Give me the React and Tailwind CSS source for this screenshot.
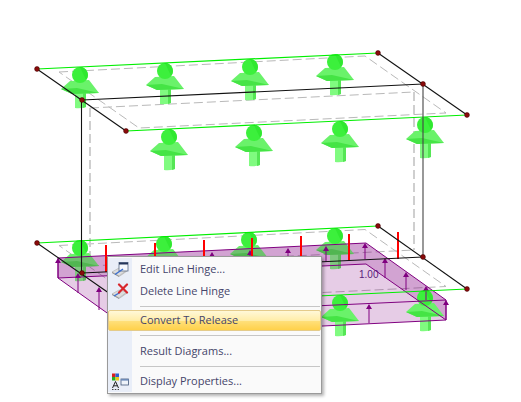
function Mushroom({ x, y }) {
  return (
    <g transform={`translate(${x} ${y})`}>
      <path d="M-5 17 L6 16 L6 32 Q0 34 -5 33 Z" fill="#80fb80" />
      <path d="M3 17 L6 16 L6 32 L3 33 Z" fill="#55e655" />
      <path d="M-19 14 L-10 6 L9 5 L19 18 L-8 19 Z" fill="#6af26a" />
      <path d="M-19 14 L-3 13 L19 18 L-8 19 Z" fill="#45e445" />
      <circle cx="0" cy="0" r="8" fill="#3cf03c" />
      <path d="M0 -8 A8 8 0 0 1 6 5 Z" fill="#30e830" />
    </g>
  )
}

function Arrow({ x, y, h }) {
  return (
    <g>
      <line x1={x} y1={y + 3} x2={x} y2={y + h} stroke="#800080" strokeWidth="1" />
      <path d={`M${x - 3} ${y + 5} L${x} ${y} L${x + 3} ${y + 5} Z`} fill="#800080" />
    </g>
  )
}

function Model() {
  const dash = { stroke: '#b9b9b9', strokeWidth: 1, strokeDasharray: '9 4', fill: 'none' }
  const nodes = [[37, 69], [378, 53], [467, 115], [126, 131], [82, 100], [423, 84], [37, 243], [378, 226], [467, 289], [82, 273], [423, 257]]
  const reds = [[106, 245], [155, 243], [204, 240], [252, 238], [301, 236], [349, 234], [398, 232]]
  const rearArrows = [[212, 252], [250, 250], [288, 248], [326, 246], [365, 243]]
  return (
    <svg width="521" height="402" viewBox="0 0 521 402" className="block">
      <g {...dash}>
        <path d="M59 72 L365 56 L446 113 L139 128 Z" />
        <path d="M59 245.5 L365 229.5 L446 286.5 L139 301.5 Z" />
        <path d="M90 108 L414 92" />
        <path d="M90 266 L414 250" />
        <path d="M90 108 L90 266" strokeWidth="2" stroke="#cfcfcf" />
        <path d="M414 92 L414 250" strokeWidth="2" stroke="#cfcfcf" />
      </g>

      {[[80, 75], [165, 71], [250, 67], [335, 62], [169, 137], [254, 133], [340, 129], [425, 125]].map(([x, y]) => (
        <Mushroom key={`${x}-${y}`} x={x} y={y} />
      ))}

      {/* slab, darker rear and right faces go under the rear row */}
      <path d="M58 258 L366 243 L366 264 L58 278 Z" fill="#800080" fillOpacity="0.2" />
      <path d="M366 243 L446 300 L446 320 L366 264 Z" fill="#800080" fillOpacity="0.2" />
      {[[80, 248], [164, 244], [249, 240], [335, 236]].map(([x, y]) => (
        <Mushroom key={`${x}-${y}`} x={x} y={y} />
      ))}
      <path d="M58 258 L366 243 L446 300 L446 320 L138 335 L58 278 Z" fill="#800080" fillOpacity="0.2" />

      {[[340, 303], [425, 298]].map(([x, y]) => (
        <Mushroom key={`${x}-${y}`} x={x} y={y} />
      ))}

      <g stroke="#800080" strokeWidth="1" fill="none">
        <path d="M58 258 L366 243 L446 300 L446 320 L138 335 L58 278 Z" />
        <path d="M58 278 L366 264 L446 320" />
        <path d="M138 314 L446 300" />
      </g>
      {rearArrows.map(([x, y]) => <Arrow key={x} x={x} y={y} h={16} />)}
      <Arrow x={58} y={258} h={20} />
      <Arrow x={78} y={273} h={20} />
      <Arrow x={99} y={287} h={23} />
      <Arrow x={385} y={258} h={20} />
      <Arrow x={406} y={272} h={18} />
      <Arrow x={426} y={286} h={14} />
      <Arrow x={446} y={300} h={20} />
      <Arrow x={369} y={304} h={19} />
      <text x="359" y="278" fontSize="10" fill="#5a1a7a" style={{ fontFamily: '"Liberation Sans", sans-serif' }}>1.00</text>

      {reds.map(([x, y]) => (
        <line key={x} x1={x} y1={y} x2={x} y2={y + 27} stroke="#f00" strokeWidth="2" />
      ))}

      <g stroke="#00ee00" strokeWidth="1.2" fill="none">
        <path d="M37 69 L378 53" />
        <path d="M126 131 L467 115" />
        <path d="M37 243 L378 226" />
        <path d="M126 305 L467 289" />
      </g>
      <g stroke="#111" strokeWidth="1.1" fill="none">
        <path d="M37 69 L126 131" />
        <path d="M378 53 L467 115" />
        <path d="M82 100 L423 84" />
        <path d="M37 243 L126 305" />
        <path d="M378 226 L467 289" />
        <path d="M82 273 L423 257" />
        <path d="M81.5 100 L81.5 273" />
        <path d="M423 84 L423 257" stroke="#444" />
      </g>
      {nodes.map(([x, y]) => (
        <circle key={`${x}-${y}`} cx={x} cy={y} r="2.4" fill="#8b0a0a" stroke="#400" strokeWidth="0.6" />
      ))}
    </svg>
  )
}

function HingeIcon({ cross }) {
  return (
    <svg width="18" height="17" viewBox="0 0 18 17">
      <path d="M1 11 L8 7 L16 9 L8 15 Z" fill="#dcdcdc" stroke="#aaa" strokeWidth="0.6" />
      <path d="M1 11 L8 15 L8 16 L1 12 Z" fill="#8f8f8f" />
      <path d="M8 15 L16 9 L16 10.5 L8 16 Z" fill="#bdbdbd" />
      {cross ? (
        <g>
          <path d="M3 13 L9 9.5" stroke="#3a6fd0" strokeWidth="1.4" />
          <g stroke="#d8262c" strokeWidth="2.2" strokeLinecap="round">
            <path d="M8 1.5 L16 9.5" />
            <path d="M16 1.5 L8 9.5" />
          </g>
        </g>
      ) : (
        <g>
          <rect x="8" y="1.5" width="9" height="8.5" fill="#f6f8fc" stroke="#5a6a86" strokeWidth="0.8" />
          <rect x="8" y="1.5" width="9" height="2" fill="#25365a" />
          <path d="M4 13.5 L12 8" stroke="#3a6fd0" strokeWidth="1.5" />
        </g>
      )}
    </svg>
  )
}

function DisplayIcon() {
  return (
    <svg width="18" height="19" viewBox="0 0 18 19">
      <rect x="1" y="1.5" width="3.5" height="3.5" fill="#d81e1e" />
      <rect x="4.5" y="1.5" width="3.5" height="3.5" fill="#2a5fd0" />
      <rect x="1" y="5" width="3.5" height="3.5" fill="#22b022" />
      <rect x="4.5" y="5" width="3.5" height="3.5" fill="#e8c81c" />
      <path d="M1.5 16 L4.5 9.5 L7.5 16 M2.7 13.8 L6.3 13.8" stroke="#222" strokeWidth="1" fill="none" />
      <path d="M1 17.5 H2.5 M3.8 17.5 H5.3 M6.6 17.5 H8" stroke="#444" strokeWidth="1" />
      <rect x="10" y="7" width="7.5" height="6" fill="#eef3fa" stroke="#44587a" strokeWidth="0.8" />
      <rect x="10" y="7" width="7.5" height="1.6" fill="#6d8ab8" />
    </svg>
  )
}

function MenuItem({ icon, label }) {
  return (
    <div className="flex h-[22px] items-stretch">
      <div className="flex w-[24px] items-center justify-center bg-[#e9eef8]">{icon}</div>
      <div className="flex items-center pl-2 text-[#45456a]">{label}</div>
    </div>
  )
}

function Separator({ height }) {
  return (
    <div className={`flex items-stretch ${height}`}>
      <div className="w-[24px] bg-[#e9eef8]" />
      <div className="flex flex-1 items-center pl-2 pr-[1px]">
        <div className="h-px w-full bg-[#c6c6c6]" />
      </div>
    </div>
  )
}

export default function App() {
  return (
    <div className="relative h-[402px] w-[521px] overflow-hidden bg-white">
      <Model />
      <div
        className="absolute left-[107px] top-[256px] w-[215px] border border-[#9a9a9a] bg-[#fafafa] py-[1px] text-[11px] shadow-[2px_2px_3px_rgba(0,0,0,0.3)]"
        style={{ fontFamily: '"Open Sans", sans-serif' }}
      >
        <MenuItem icon={<HingeIcon />} label="Edit Line Hinge..." />
        <MenuItem icon={<HingeIcon cross />} label="Delete Line Hinge" />
        <Separator height="h-[8px]" />
        <div className="flex h-[21px] items-center rounded-[2px] border border-[#e4cb8a] bg-[linear-gradient(to_bottom,#fff8d8_0%,#ffeda8_50%,#ffdf78_55%,#ffd14a_100%)] pl-[31px] text-[#45456a]">
          Convert To Release
        </div>
        <Separator height="h-[9px]" />
        <MenuItem label="Result Diagrams..." />
        <Separator height="h-[8px]" />
        <MenuItem icon={<DisplayIcon />} label="Display Properties..." />
      </div>
    </div>
  )
}
